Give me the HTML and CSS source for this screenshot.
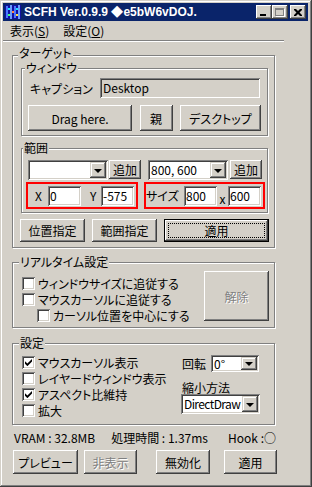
FILE: index.html
```html
<!DOCTYPE html>
<html lang="ja">
<head>
    <meta charset="UTF-8">
    <title>SCFH</title>
    <link rel="stylesheet" href="styles.css">
</head>
<body>
<div class="window">
    <div class="titlebar">
        <svg class="app-icon" width="16" height="16" viewBox="0 0 16 16">
            <rect x="0" y="1" width="16" height="14" fill="#1010a0"/>
            <rect x="1" y="2" width="2" height="12" fill="#4a78ff"/>
            <rect x="5" y="1" width="2" height="14" fill="#6a9cff"/>
            <rect x="9" y="2" width="2" height="12" fill="#4a78ff"/>
            <rect x="13" y="1" width="2" height="14" fill="#6a9cff"/>
            <rect x="3" y="4" width="2" height="2" fill="#20e0ff"/>
            <rect x="7" y="7" width="2" height="2" fill="#ff8040"/>
            <rect x="11" y="4" width="2" height="2" fill="#20e0ff"/>
            <rect x="3" y="10" width="2" height="2" fill="#40ff80"/>
            <rect x="11" y="10" width="2" height="2" fill="#ffe040"/>
        </svg>
        <span class="title-text">SCFH Ver.0.9.9 ◆e5bW6vDOJ.</span>
        <span class="cap-btn cap-min"><i></i></span>
        <span class="cap-btn cap-max"><i></i></span>
        <span class="cap-btn cap-close">
            <svg width="8" height="7" viewBox="0 0 8 7"><path d="M0 0h2l2 2 2-2h2v1l-2.5 2.5L8 6v1H6L4 5 2 7H0V6l2.5-2.5L0 1z" fill="#000"/></svg>
        </span>
    </div>

    <div class="menubar">
        <span class="menu-item">表示(<u>S</u>)</span>
        <span class="menu-item">設定(<u>O</u>)</span>
    </div>
    <div class="menu-line"></div>

    <div class="content">
        <fieldset class="group group-target">
            <legend>ターゲット</legend>

            <fieldset class="group group-window">
                <legend>ウィンドウ</legend>
                <div class="caption-row">
                    <span class="caption-label">キャプション</span>
                    <span class="edit edit-readonly caption-edit">Desktop</span>
                </div>
                <div class="window-buttons">
                    <span class="btn btn-drag">Drag here.</span>
                    <span class="btn btn-parent">親</span>
                    <span class="btn btn-desktop">デスクトップ</span>
                </div>
            </fieldset>

            <fieldset class="group group-range">
                <legend>範囲</legend>
                <div class="preset-row">
                    <span class="combo combo-pos"><span class="combo-text"></span><span class="combo-arrow"><i></i></span></span>
                    <span class="btn btn-add">追加</span>
                    <span class="combo combo-size"><span class="combo-text">800, 600</span><span class="combo-arrow"><i></i></span></span>
                    <span class="btn btn-add">追加</span>
                </div>
                <div class="coord-row">
                    <div class="red-box pos-box">
                        <span class="coord-label label-x">X</span>
                        <span class="edit edit-num">0</span>
                        <span class="coord-label label-y">Y</span>
                        <span class="edit edit-num">-575</span>
                    </div>
                    <div class="red-box size-box">
                        <span class="coord-label label-size">サイズ</span>
                        <span class="edit edit-num">800</span>
                        <span class="coord-label label-times">x</span>
                        <span class="edit edit-num">600</span>
                    </div>
                </div>
            </fieldset>

            <div class="target-buttons">
                <span class="btn btn-mid">位置指定</span>
                <span class="btn btn-mid">範囲指定</span>
                <span class="btn btn-default btn-apply-range"><span class="focus-rect">適用</span></span>
            </div>
        </fieldset>

        <fieldset class="group group-realtime">
            <legend>リアルタイム設定</legend>
            <div class="realtime-body">
                <div class="check-list">
                    <div class="check-row"><span class="check"></span><span>ウィンドウサイズに追従する</span></div>
                    <div class="check-row"><span class="check"></span><span>マウスカーソルに追従する</span></div>
                    <div class="check-row indent"><span class="check"></span><span>カーソル位置を中心にする</span></div>
                </div>
                <span class="btn btn-release disabled">解除</span>
            </div>
        </fieldset>

        <fieldset class="group group-settings">
            <legend>設定</legend>
            <div class="settings-body">
                <div class="check-list">
                    <div class="check-row"><span class="check checked"><svg width="7" height="7" viewBox="0 0 7 7"><path d="M0 2.2l2.4 2.4L7 0v2.6L2.4 7.2 0 4.8z" fill="#000"/></svg></span><span>マウスカーソル表示</span></div>
                    <div class="check-row"><span class="check"></span><span>レイヤードウィンドウ表示</span></div>
                    <div class="check-row"><span class="check checked"><svg width="7" height="7" viewBox="0 0 7 7"><path d="M0 2.2l2.4 2.4L7 0v2.6L2.4 7.2 0 4.8z" fill="#000"/></svg></span><span>アスペクト比維持</span></div>
                    <div class="check-row"><span class="check"></span><span>拡大</span></div>
                </div>
                <div class="settings-side">
                    <div class="rotate-row">
                        <span class="rotate-label">回転</span>
                        <span class="combo combo-rotate"><span class="combo-text">0°</span><span class="combo-arrow"><i></i></span></span>
                    </div>
                    <div class="shrink-label">縮小方法</div>
                    <span class="combo combo-shrink"><span class="combo-text">DirectDraw</span><span class="combo-arrow"><i></i></span></span>
                </div>
            </div>
        </fieldset>

        <div class="status-row">
            <span class="stat-vram">VRAM : 32.8MB</span>
            <span class="stat-time">処理時間 : 1.37ms</span>
            <span class="stat-hook">Hook :○</span>
        </div>

        <div class="bottom-buttons">
            <span class="btn btn-preview">プレビュー</span>
            <span class="btn btn-hide disabled">非表示</span>
            <span class="btn btn-disable">無効化</span>
            <span class="btn btn-apply">適用</span>
        </div>
    </div>
</div>
</body>
</html>
```

FILE: styles.css
```css
* {
    box-sizing: border-box;
}

body {
    margin: 0;
    background: #fff;
    font-family: "Noto Sans CJK JP", sans-serif;
    font-size: 12px;
    font-feature-settings: "palt";
    color: #000;
}

.window {
    width: 312px;
    height: 487px;
    background: #d4d0c8;
    padding: 3px 4px 4px 3px;
    box-shadow: inset -1px -1px #404040, inset 1px 1px #d4d0c8, inset -2px -2px #808080, inset 2px 2px #fff;
    display: flex;
    flex-direction: column;
}

/* title bar */
.titlebar {
    height: 18px;
    background: #0a246a;
    display: flex;
    align-items: center;
    padding: 0 2px 0 2px;
}

.app-icon {
    flex: none;
    margin-right: 3px;
}

.title-text {
    flex: 1;
    color: #fff;
    font-family: "Liberation Sans", Arial, sans-serif;
    font-weight: bold;
    font-size: 12px;
    white-space: nowrap;
    font-feature-settings: normal;
}

.cap-btn {
    width: 16px;
    height: 14px;
    background: #d4d0c8;
    box-shadow: inset -1px -1px #404040, inset 1px 1px #fff, inset -2px -2px #808080, inset 2px 2px #d4d0c8;
    display: flex;
    align-items: center;
    justify-content: center;
}

.cap-min i {
    display: block;
    width: 6px;
    height: 2px;
    background: #000;
    margin: 6px 3px 0 0;
}

.cap-max i {
    display: block;
    width: 9px;
    height: 8px;
    border: 1px solid #808080;
    border-top-width: 2px;
    box-shadow: 1px 1px #fff;
    margin: 0 1px 1px 0;
}

.cap-close {
    margin-left: 2px;
}

/* menu */
.menubar {
    height: 19px;
    display: flex;
    align-items: center;
    padding-left: 7px;
}

.menu-item {
    margin-right: 14px;
    line-height: 14px;
}

.menu-line {
    width: 281px;
    height: 2px;
    border-top: 1px solid #808080;
    border-bottom: 1px solid #fff;
}

.content {
    padding-left: 9px;
    display: flex;
    flex-direction: column;
}

/* group boxes */
.group {
    margin: 0;
    min-width: 0;
    border: 1px solid #808080;
    box-shadow: inset 1px 1px #fff, 1px 1px #fff;
}

.group legend {
    line-height: 12px;
    padding: 0 1px;
    margin-left: -3px;
    background: #d4d0c8;
}

.group-target {
    width: 263px;
    margin-top: 7px;
    padding: 1px 6px 5px 8px;
}

/* the outer caption sits a little higher on its line */
.group-target > legend {
    position: relative;
    top: -2px;
}

.group-window {
    padding: 0 6px 4px 6px;
}

.caption-row {
    display: flex;
    align-items: center;
    margin-top: 4px;
}

.caption-label {
    margin-left: 2px;
}

.caption-edit {
    width: 160px;
    margin-left: auto;
    margin-right: 1px;
}

.window-buttons {
    display: flex;
    justify-content: space-between;
    margin-top: 7px;
}

/* controls */
.edit {
    display: block;
    height: 20px;
    line-height: 20px;
    padding-left: 3px;
    background: #fff;
    box-shadow: inset 1px 1px #808080, inset -1px -1px #fff, inset 2px 2px #404040, inset -2px -2px #d4d0c8;
    white-space: nowrap;
    overflow: hidden;
}

.edit-readonly {
    background: #d4d0c8;
}

.btn {
    display: flex;
    align-items: center;
    justify-content: center;
    background: #d4d0c8;
    box-shadow: inset -1px -1px #404040, inset 1px 1px #fff, inset -2px -2px #808080, inset 2px 2px #d4d0c8;
    white-space: nowrap;
}

.btn.disabled {
    color: #808080;
    text-shadow: 1px 1px #fff;
}

.btn-default {
    border: 1px solid #000;
}

.focus-rect {
    display: flex;
    align-items: center;
    justify-content: center;
    width: calc(100% - 6px);
    height: calc(100% - 6px);
    border: 1px dotted #000;
}

.btn-drag {
    width: 104px;
    height: 26px;
}

.btn-parent {
    width: 33px;
    height: 26px;
}

.btn-desktop {
    width: 81px;
    height: 26px;
}

.combo {
    display: flex;
    height: 20px;
    padding: 2px;
    background: #fff;
    box-shadow: inset 1px 1px #808080, inset -1px -1px #fff, inset 2px 2px #404040, inset -2px -2px #d4d0c8;
}

.combo-text {
    flex: 1;
    min-width: 0;
    padding-left: 1px;
    line-height: 16px;
    white-space: nowrap;
}

.combo-arrow {
    flex: none;
    width: 16px;
    background: #d4d0c8;
    box-shadow: inset -1px -1px #404040, inset 1px 1px #d4d0c8, inset -2px -2px #808080, inset 2px 2px #fff;
    display: flex;
    align-items: center;
    justify-content: center;
}

.combo-arrow i {
    display: block;
    width: 0;
    height: 0;
    border-left: 4px solid transparent;
    border-right: 4px solid transparent;
    border-top: 4px solid #000;
    margin-top: 1px;
}

/* range group */
.group-range {
    margin-top: 6px;
    padding: 0 2px 3px 4px;
}

.preset-row {
    display: flex;
    margin-top: 6px;
    height: 20px;
}

.combo-pos {
    width: 80px;
    margin-left: 2px;
}

.combo-size {
    width: 80px;
    margin-left: 7px;
}

.btn-add {
    width: 32px;
    height: 19px;
    margin-left: 1px;
}

.combo-size + .btn-add {
    margin-left: 2px;
}

.coord-row {
    display: flex;
    margin-top: 2px;
    gap: 6px;
}

.red-box {
    height: 27px;
    border: 2px solid #f00;
    display: flex;
    align-items: center;
}

.pos-box {
    width: 112px;
    padding-left: 7px;
}

.size-box {
    width: 121px;
}

.edit-num {
    width: 33px;
    padding-left: 2px;
}

.label-x {
    width: 13px;
}

.label-y {
    width: 20px;
    padding-left: 9px;
}

.label-size {
    width: 38px;
}

.label-times {
    width: 11px;
    text-align: center;
    align-self: flex-end;
    line-height: 14px;
    margin-bottom: 1px;
}

.target-buttons {
    display: flex;
    gap: 7px;
    margin: 6px -1px 0 -1px;
}

.btn-mid {
    width: 65px;
    height: 23px;
}

.btn-apply-range {
    width: 105px;
    height: 23px;
}

/* realtime group */
.group-realtime {
    width: 263px;
    margin-top: 8px;
    padding: 3px 5px 4px 9px;
}

.realtime-body {
    display: flex;
    justify-content: space-between;
    align-items: flex-start;
}

.check-list {
    margin-top: 4px;
}

.check-row {
    display: flex;
    align-items: center;
    height: 16px;
    white-space: nowrap;
}

.check-row.indent {
    padding-left: 15px;
}

.check {
    flex: none;
    width: 13px;
    height: 13px;
    margin-right: 3px;
    background: #fff;
    box-shadow: inset 1px 1px #808080, inset -1px -1px #fff, inset 2px 2px #404040, inset -2px -2px #d4d0c8;
    display: flex;
    align-items: center;
    justify-content: center;
}

.btn-release {
    width: 65px;
    height: 50px;
}

/* settings group */
.group-settings {
    width: 263px;
    margin-top: 9px;
    padding: 0 5px 6px 9px;
}

.settings-body {
    display: flex;
}

.settings-body .check-list {
    margin-top: 5px;
    width: 159px;
}

.settings-side {
    padding-top: 6px;
}

.rotate-row {
    display: flex;
    align-items: center;
    padding-left: 1px;
}

.rotate-label {
    width: 29px;
}

.combo-rotate {
    width: 48px;
    height: 17px;
}

.combo-rotate .combo-text {
    line-height: 13px;
}

.shrink-label {
    line-height: 12px;
    margin-top: 10px;
    padding-left: 1px;
}

.combo-shrink {
    width: 79px;
}

.combo-shrink .combo-text {
    letter-spacing: -0.6px;
}

/* status and bottom buttons */
.status-row {
    display: flex;
    line-height: 14px;
    margin-top: 6px;
    padding-left: 2px;
    width: 264px;
}

.stat-time {
    margin-left: 16px;
}

.stat-hook {
    margin-left: auto;
}

.bottom-buttons {
    display: flex;
    margin-top: 5px;
    padding-left: 1px;
}

.btn-preview {
    width: 65px;
    height: 24px;
}

.btn-hide {
    width: 53px;
    height: 24px;
    margin-left: 6px;
}

.btn-disable {
    width: 54px;
    height: 24px;
    margin-left: 19px;
}

.btn-apply {
    width: 53px;
    height: 24px;
    margin-left: 14px;
}
```
